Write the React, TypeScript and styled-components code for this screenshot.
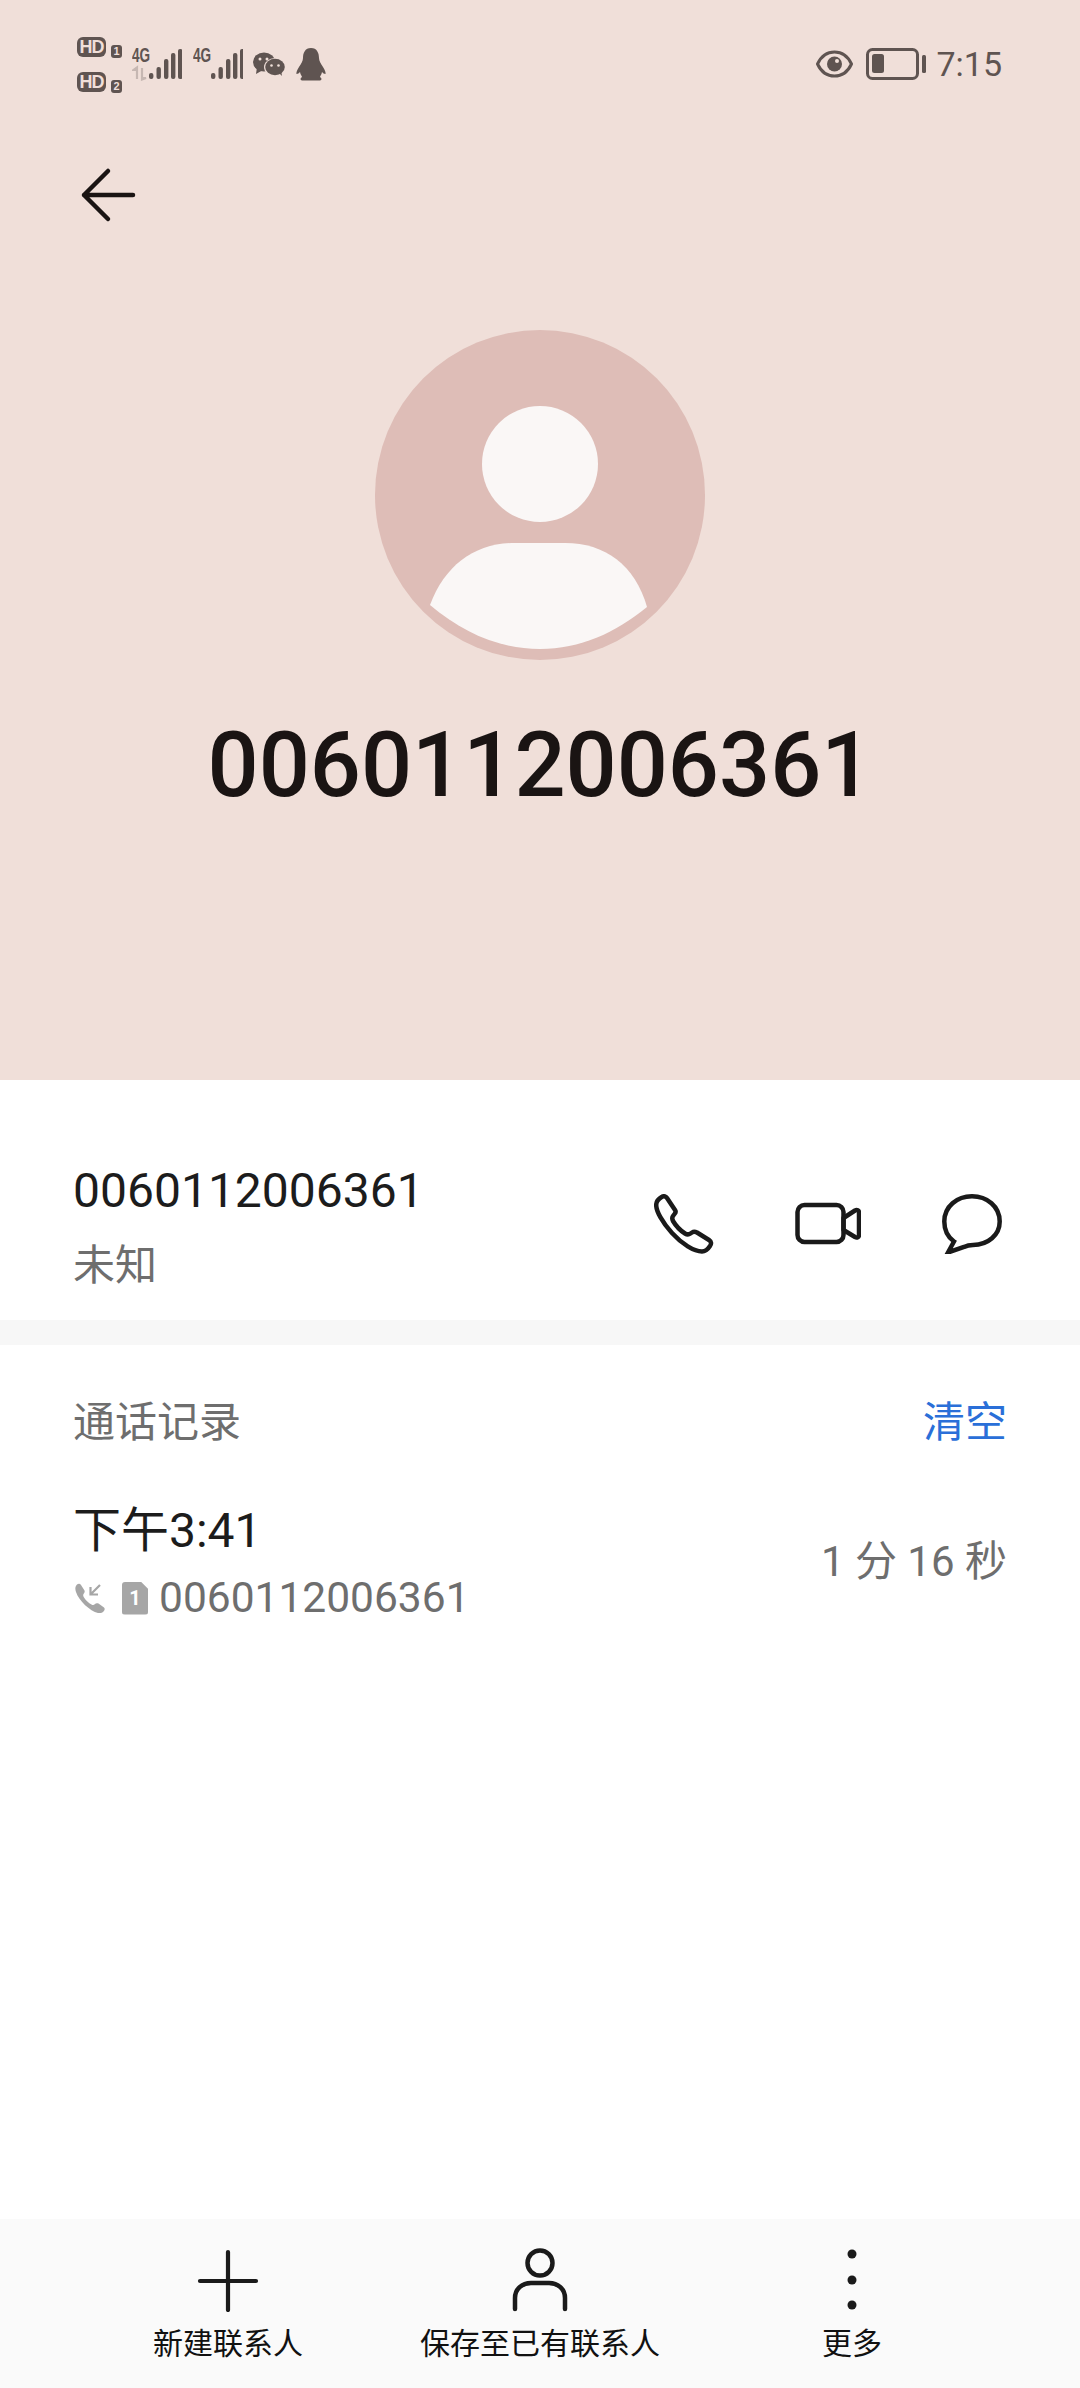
import React from 'react';
import styled, { createGlobalStyle } from 'styled-components';

const GlobalStyle = createGlobalStyle`
  html, body {
    margin: 0;
    padding: 0;
    background: #ffffff;
  }
  body {
    font-family: Roboto, "Noto Sans CJK SC", sans-serif;
  }
`;

const STATUS = '#5f5451';

const Page = styled.div`
  width: 1080px;
  height: 2388px;
  display: flex;
  flex-direction: column;
  overflow: hidden;
  background: #ffffff;
`;

const Hero = styled.header`
  height: 1080px;
  flex-shrink: 0;
  background: #f0dfd9;
  display: flex;
  flex-direction: column;
`;

const StatusBar = styled.div`
  height: 128px;
  padding: 0 78px 0 77px;
  display: flex;
  align-items: center;
  justify-content: space-between;
  color: ${STATUS};
`;

const StatusGroup = styled.div`
  display: flex;
  align-items: center;
`;

const SimColumn = styled.div`
  display: flex;
  flex-direction: column;
  gap: 15px;
  margin-right: 10px;
`;

const SimLine = styled.div`
  display: flex;
  align-items: flex-end;
  gap: 5px;
  height: 20px;
`;

const HdBadge = styled.span`
  width: 29px;
  height: 20px;
  border-radius: 6px;
  background: ${STATUS};
  color: #f0dfd9;
  font: 700 18px/20px "Liberation Sans", sans-serif;
  letter-spacing: -1px;
  text-align: center;
`;

const SimNumber = styled.span`
  width: 11px;
  height: 13px;
  border-radius: 3px;
  background: ${STATUS};
  color: #f0dfd9;
  font: 700 11px/13px "Liberation Sans", sans-serif;
  text-align: center;
  margin-bottom: -1px;
`;

const Signal = styled.div<{ $gap: number }>`
  position: relative;
  display: flex;
  align-items: flex-end;
  margin-right: ${(p) => p.$gap}px;
  height: 34px;
`;

const NetLabel = styled.span`
  position: absolute;
  left: 0;
  top: -1px;
  font: 700 20px/18px "Liberation Sans", sans-serif;
  transform: scaleX(0.68);
  transform-origin: left top;
`;

const StatusIcon = styled.svg<{ $gap?: number }>`
  display: block;
  flex-shrink: 0;
  margin-right: ${(p) => p.$gap ?? 0}px;
`;

const Clock = styled.span`
  font: 400 34px/40px Roboto, sans-serif;
  margin-left: 10px;
  width: 66px;
  text-align: right;
`;

const BackBar = styled.div`
  margin-top: 37px;
  padding-left: 78px;
  height: 60px;
`;

const Avatar = styled.svg`
  display: block;
  margin: 105px auto 0;
`;

const HeroName = styled.h1`
  margin: 56px 0 0;
  font: 500 90px/100px Roboto, sans-serif;
  color: #1a1413;
  text-align: center;
`;

const ContactRow = styled.section`
  height: 240px;
  flex-shrink: 0;
  padding: 81px 78px 0 73px;
  box-sizing: border-box;
  display: flex;
  align-items: flex-start;
  justify-content: space-between;
`;

const ContactText = styled.div`
  display: flex;
  flex-direction: column;
  gap: 15px;
`;

const PrimaryText = styled.div`
  font: 400 48px/60px Roboto, "Noto Sans CJK SC", sans-serif;
  color: #1c1c1c;
`;

const SecondaryText = styled.div`
  font: 400 42px/60px Roboto, "Noto Sans CJK SC", sans-serif;
  color: #6e6e6e;
`;

const Actions = styled.div`
  display: flex;
  align-items: center;
  gap: 81px;
  margin-top: 33px;
`;

const Divider = styled.div`
  height: 25px;
  flex-shrink: 0;
  background: #f7f7f7;
`;

const History = styled.section`
  flex: 1;
  padding: 48px 73px 0;
`;

const HistoryHead = styled.div`
  display: flex;
  justify-content: space-between;
  align-items: center;
  height: 60px;
`;

const ClearLink = styled.span`
  font: 400 42px/60px Roboto, "Noto Sans CJK SC", sans-serif;
  color: #2a6fd8;
`;

const CallRow = styled.div`
  margin-top: 48px;
  display: flex;
  align-items: center;
  justify-content: space-between;
`;

const CallDetail = styled.div`
  display: flex;
  flex-direction: column;
  gap: 7px;
`;

const CallLine = styled.div`
  display: flex;
  align-items: center;
  height: 60px;
`;

const CallIcon = styled.svg`
  display: block;
  margin-left: 2px;
  margin-right: 17px;
`;

const SimTag = styled.span`
  width: 26px;
  height: 33px;
  margin-right: 11px;
  background: #a6a6a6;
  color: #ffffff;
  border-radius: 3px;
  clip-path: polygon(0 0, 72% 0, 100% 22%, 100% 100%, 0 100%);
  font: 700 20px/33px Roboto, sans-serif;
  text-align: center;
`;

const CallNumber = styled(SecondaryText)`
  font-size: 42.5px;
`;

const CallDuration = styled(SecondaryText)`
  margin-bottom: 5px;
`;

const BottomBar = styled.nav`
  height: 169px;
  flex-shrink: 0;
  background: #fafafa;
  padding: 29px 72px 0;
  box-sizing: border-box;
  display: grid;
  grid-template-columns: repeat(3, 312px);
`;

const BottomItem = styled.div`
  display: flex;
  flex-direction: column;
  align-items: center;
  gap: 12px;
`;

const BottomLabel = styled.span`
  font: 400 30px/40px Roboto, "Noto Sans CJK SC", sans-serif;
  color: #111111;
`;

const Bars = ({ x }: { x: number[] }) => {
  const tops = [26, 20, 12, 6, 2];
  return (
    <>
      {x.map((bx, i) => (
        <rect key={bx} x={bx} y={tops[i]} width={4.4} height={32 - tops[i]} rx={2} fill={STATUS} />
      ))}
    </>
  );
};

const Phone = () => (
  <svg width="60" height="60" viewBox="0 0 60 60" fill="none" stroke="#1a1a1a" strokeWidth="4.5" strokeLinejoin="round">
    <path d="M8 2.8C10 1.6 12 2.5 13 4L21 16C22 17.5 21.5 19 20.5 20L19 22C18 23.5 18 25 19 27C22 32 27 37 31 39.5C33 40.7 35 40.5 36.5 39.5L38 38.5C39.5 37.5 41 37.5 43 38.5L55 46C57.5 47.5 57.5 50 56 52C54 55 51 57.5 48 57.5C40 57.5 28 50 18 39C8 28 2.2 17 2.2 11C2.2 7.5 5 4.5 8 2.8Z" />
  </svg>
);

const Video = () => (
  <svg width="66" height="60" viewBox="0 0 66 60" fill="none" stroke="#1a1a1a" strokeWidth="4.5" strokeLinejoin="round">
    <rect x="2.5" y="11" width="46" height="37" rx="7" />
    <path d="M48.5 24L60 16.5C62 15.5 64 16.5 64 18.5V41C64 43 62 44 60 43L48.5 36Z" />
  </svg>
);

const Chat = () => (
  <svg width="60" height="60" viewBox="0 0 60 60" fill="none" stroke="#1a1a1a" strokeWidth="4.5" strokeLinejoin="miter">
    <path d="M30 2.3C45 2.3 57.7 12.5 57.7 27.5C57.7 41 46 51 31 51C27 51 25 51.5 22 53L6 58.5L12 47.5C5 42.5 2.3 35 2.3 27.5C2.3 12.5 15 2.3 30 2.3Z" />
  </svg>
);

export default function App() {
  return (
    <Page>
      <GlobalStyle />
      <Hero>
        <StatusBar>
          <StatusGroup>
            <SimColumn>
              <SimLine>
                <HdBadge>HD</HdBadge>
                <SimNumber>1</SimNumber>
              </SimLine>
              <SimLine>
                <HdBadge>HD</HdBadge>
                <SimNumber>2</SimNumber>
              </SimLine>
            </SimColumn>
            <Signal $gap={11}>
              <NetLabel>4G</NetLabel>
              <StatusIcon width="50" height="34" viewBox="0 0 50 34">
                <Bars x={[17, 24.5, 32, 39, 46]} />
                <path d="M5 32V23H1.500L5 20.500V32ZM10 21V31H14L10 32.500V21Z" stroke="#c6b7b2" strokeWidth="2.200" fill="#c6b7b2" />
              </StatusIcon>
            </Signal>
            <Signal $gap={10}>
              <NetLabel>4G</NetLabel>
              <StatusIcon width="50" height="34" viewBox="0 0 50 34">
                <Bars x={[18, 25.5, 33, 40, 47]} />
              </StatusIcon>
            </Signal>
            <StatusIcon $gap={11} width="32" height="24" viewBox="0 0 32 24">
              <ellipse cx="11" cy="10" rx="11" ry="9.5" fill={STATUS} />
              <path d="M4 15L3 22L10 18Z" fill={STATUS} />
              <ellipse cx="22" cy="15" rx="11" ry="9" fill="#f0dfd9" />
              <ellipse cx="22" cy="15" rx="9.8" ry="8.2" fill={STATUS} />
              <path d="M26 21L29 24L28 18Z" fill={STATUS} />
              <circle cx="7" cy="7" r="1.5" fill="#f0dfd9" />
              <circle cx="14" cy="7" r="1.5" fill="#f0dfd9" />
              <circle cx="18.5" cy="13.5" r="1.3" fill="#f0dfd9" />
              <circle cx="25.5" cy="13.5" r="1.3" fill="#f0dfd9" />
            </StatusIcon>
            <StatusIcon width="30" height="33" viewBox="0 0 30 33">
              <path fill={STATUS} d="M15 0C9 0 7 5 7 10C7 13 5 16 3 19C1 22 0 25 .5 26C2 26 3 25 4 24C4.5 27 6 28 6 29C4 30 4 32 6 32.5H24C26 32 26 30 24 29C24 28 25.500 27 26 24C27 25 28 26 29.500 26C30 25 29 22 27 19C25 16 23 13 23 10C23 5 21 0 15 0Z" />
            </StatusIcon>
          </StatusGroup>
          <StatusGroup>
            <StatusIcon $gap={13} width="37" height="28" viewBox="0 0 37 28">
              <path d="M1.500 14C5 6.500 11 2 18.500 2S32 6.500 35.500 14C32 21.500 26 26 18.500 26S5 21.500 1.500 14Z" fill="none" stroke={STATUS} strokeWidth="3" />
              <circle cx="18.500" cy="14" r="7.500" fill={STATUS} />
              <circle cx="21" cy="11" r="2" fill="#f0dfd9" />
            </StatusIcon>
            <StatusIcon width="60" height="32" viewBox="0 0 60 32">
              <rect x="1.500" y="1.500" width="50" height="29" rx="5" fill="none" stroke={STATUS} strokeWidth="3" />
              <rect x="6" y="6" width="12" height="19" rx="2.500" fill={STATUS} />
              <rect x="56" y="7" width="4" height="18" rx="1.500" fill={STATUS} />
            </StatusIcon>
            <Clock>7:15</Clock>
          </StatusGroup>
        </StatusBar>
        <BackBar>
          <svg width="60" height="60" viewBox="0 0 60 60" fill="none" stroke="#1a1413" strokeWidth="4.500" strokeLinecap="round" strokeLinejoin="round">
            <path d="M30 6L6 30L30 54M6 30H55" />
          </svg>
        </BackBar>
        <Avatar width="330" height="330" viewBox="0 0 330 330">
          <circle cx="165" cy="165" r="165" fill="#debdb7" />
          <circle cx="165" cy="134" r="58" fill="#faf7f6" />
          <path fill="#faf7f6" d="M55 275C70 235 100 213 140 213H190C230 213 260 235 272 277C240 303 205 319 165 319C125 319 88 303 55 275Z" />
        </Avatar>
        <HeroName>0060112006361</HeroName>
      </Hero>
      <ContactRow>
        <ContactText>
          <PrimaryText>0060112006361</PrimaryText>
          <SecondaryText>未知</SecondaryText>
        </ContactText>
        <Actions>
          <Phone />
          <Video />
          <Chat />
        </Actions>
      </ContactRow>
      <Divider />
      <History>
        <HistoryHead>
          <SecondaryText>通话记录</SecondaryText>
          <ClearLink>清空</ClearLink>
        </HistoryHead>
        <CallRow>
          <CallDetail>
            <PrimaryText>下午3:41</PrimaryText>
            <CallLine>
              <CallIcon width="30" height="30" viewBox="0 0 30 30">
                <path fill="#a6a6a6" d="M2 1.500C3.500 .5 5 .5 6 2L9.500 7.500C10 9 9.500 10 8.500 11C8 12 8 13 9 14.500C11 17.500 13.500 20 16.500 21.500C18 22.500 19 22 20 21C21 20 22 20 23.500 20.500L29 24.500C30 25.500 30 27 28.500 28.500C27 30 25 30.500 23 30C15 28 4 18 1 9C0 6 0 3.500 2 1.500Z" />
                <path d="M25 2L15.500 11.500M15.500 4V11.500H23" fill="none" stroke="#a6a6a6" strokeWidth="2.200" />
              </CallIcon>
              <SimTag>1</SimTag>
              <CallNumber>0060112006361</CallNumber>
            </CallLine>
          </CallDetail>
          <CallDuration>1 分 16 秒</CallDuration>
        </CallRow>
      </History>
      <BottomBar>
        <BottomItem>
          <svg width="64" height="64" viewBox="0 0 64 64" fill="none" stroke="#1a1a1a" strokeWidth="4.200" strokeLinecap="round">
            <path d="M32 4V62M4 33H60" />
          </svg>
          <BottomLabel>新建联系人</BottomLabel>
        </BottomItem>
        <BottomItem>
          <svg width="64" height="64" viewBox="0 0 64 64" fill="none" stroke="#1a1a1a" strokeWidth="4.500" strokeLinecap="round">
            <circle cx="32" cy="15" r="12.500" />
            <path d="M7 61V50C7 41 14 35 23 35H41C50 35 57 41 57 50V61" />
          </svg>
          <BottomLabel>保存至已有联系人</BottomLabel>
        </BottomItem>
        <BottomItem>
          <svg width="64" height="64" viewBox="0 0 64 64" fill="#1a1a1a">
            <circle cx="32" cy="6" r="4.500" />
            <circle cx="32" cy="32" r="4.500" />
            <circle cx="32" cy="57" r="4.500" />
          </svg>
          <BottomLabel>更多</BottomLabel>
        </BottomItem>
      </BottomBar>
    </Page>
  );
}
